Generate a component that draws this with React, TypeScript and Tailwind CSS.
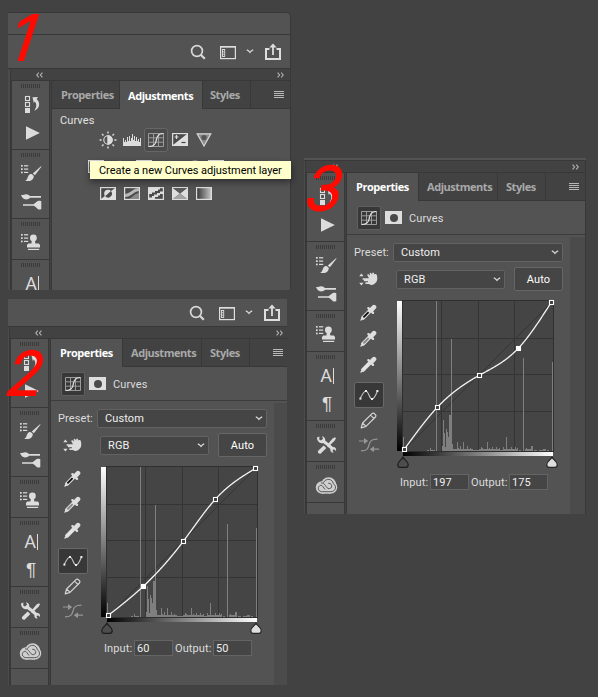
import React from "react";

const UI = "font-['Roboto','Liberation_Sans',sans-serif]";

type Pt = [number, number];

/* Natural cubic spline through the control points, sampled at every half pixel. */
function spline(p: Pt[]): string {
  const n = p.length;
  const y2 = new Array(n).fill(0);
  const u = new Array(n).fill(0);
  for (let i = 1; i < n - 1; i++) {
    const sig = (p[i][0] - p[i - 1][0]) / (p[i + 1][0] - p[i - 1][0]);
    const q = sig * y2[i - 1] + 2;
    y2[i] = (sig - 1) / q;
    const d =
      (p[i + 1][1] - p[i][1]) / (p[i + 1][0] - p[i][0]) -
      (p[i][1] - p[i - 1][1]) / (p[i][0] - p[i - 1][0]);
    u[i] = ((6 * d) / (p[i + 1][0] - p[i - 1][0]) - sig * u[i - 1]) / q;
  }
  for (let i = n - 2; i >= 0; i--) y2[i] = y2[i] * y2[i + 1] + u[i];
  let out = "";
  let k = 0;
  for (let x = p[0][0]; x <= p[n - 1][0]; x += 0.5) {
    while (k < n - 2 && x > p[k + 1][0]) k++;
    const h = p[k + 1][0] - p[k][0];
    const a = (p[k + 1][0] - x) / h;
    const b = (x - p[k][0]) / h;
    const y =
      a * p[k][1] + b * p[k + 1][1] +
      (((a ** 3 - a) * y2[k] + (b ** 3 - b) * y2[k + 1]) * h * h) / 6;
    out += `${out ? "L" : "M"}${x.toFixed(2)} ${y.toFixed(2)}`;
  }
  return out;
}

/* ---------- sidebar icons ---------- */

const Slot = ({ children }: { children: React.ReactNode }) => (
  <svg width="22" height="18" viewBox="0 0 22 18" fill="#dcdcdc" className="block overflow-visible">
    {children}
  </svg>
);

const List = () => (
  <g>
    {[0, 3.3, 6.6].map((y) => (
      <g key={y}>
        <rect x="0" y={y} width="1.7" height="1.7" />
        <rect x="3" y={y + 0.2} width="4.2" height="1.2" />
      </g>
    ))}
  </g>
);

const HistoryIcon = () => (
  <Slot>
    <g fill="none" stroke="#dcdcdc" strokeWidth="1.1">
      <rect x="4.5" y="0.5" width="4" height="4" />
      <rect x="4.5" y="6.5" width="4" height="4" />
    </g>
    <rect x="4" y="12" width="5" height="5" />
    <path d="M11.5 1.3 17 1 15.6 3.2C19.6 6.2 19 12.5 13.2 14.8 15.8 11.5 16 8 13.8 5.6L12.8 7Z" />
  </Slot>
);
const PlayIcon = () => (
  <Slot><path d="M5 2.2 18.8 9 5 15.8Z" /></Slot>
);
const BrushIcon = () => (
  <Slot>
    <List />
    <path d="M20.6 1.6 13.9 10.3 11.8 8.4 20 1.3Z" />
    <path d="M10.8 9.2C12.6 10 13 11 12.7 12.2 11.8 15.8 7.5 16.8 4.2 15.7 6.6 15 6.3 12.6 7.4 10.8 8.2 9.5 9.6 8.8 10.8 9.2Z" />
  </Slot>
);
const BrushesIcon = () => (
  <Slot>
    <path d="M0 2C2.2 2.4 3 1.2 5 1.2 7 1.2 8 2.2 9 3H20V4.8H9C8 6 7 6.4 5 6.4 2.6 6.4 1 4.6 0 2Z" />
    <path d="M2 11.2H12.5C14.2 10.4 16 8 17.6 7.8 18.8 7.6 20.3 8 20.3 8.2V16C19 16.8 17.5 16.6 16.8 16 15.3 14.8 14 13 12.5 12.8H2Z" />
  </Slot>
);
const StampIcon = () => (
  <Slot>
    <List />
    <circle cx="12.4" cy="4" r="3.4" />
    <path d="M11 6h2.8l.6 3.6h3.4L19 11v2.6H6V11l1.2-1.4h3.2Z" />
    <rect x="7" y="14.8" width="11.2" height="1.2" />
  </Slot>
);
const TypeIcon = () => (
  <div className="flex h-[18px] w-[22px] items-center justify-center gap-px text-[18px] leading-[18px] text-[#dcdcdc]">
    <span className="font-['Roboto',sans-serif]">A</span>
    <span className="h-4 w-px bg-[#dcdcdc]" />
  </div>
);
const ParagraphIcon = () => (
  <div className="flex h-[18px] w-[22px] items-center justify-center font-['Liberation_Sans',sans-serif] text-[19px] leading-[18px] text-[#dcdcdc]">
    ¶
  </div>
);
const ToolsIcon = () => (
  <Slot>
    <path d="M1 1.6 3.4 0.4 3.2 3.6 5 4.6 7.2 2.6 5.8 0.4C8 .2 9.6 2 9.2 4.6L17 11C19.4 10.8 20.6 12.6 20 15L18 13.2 16.4 14.6 17.6 16.6C15.4 17 14 15.2 14.4 13L7.2 7C4.2 8.2 1 5.6 1 1.6Z" />
    <path d="M19 1.2 20 2.2 18.6 4.8 12 11 10.6 9.6 16.6 2.6Z" />
    <path d="M7.6 9.4 10.4 12 4.8 17.6C3.4 18.4 1.2 16.6 2 15Z" />
    <path d="m9.4 9.2 2 1.8" stroke="#535353" strokeWidth="1" />
  </Slot>
);
const CloudIcon = () => (
  <Slot>
    <g fill="#cfcfcf">
      <circle cx="6" cy="10.5" r="6.2" />
      <circle cx="12.6" cy="7.8" r="7.6" />
      <circle cx="14.8" cy="10.2" r="6.4" />
      <rect x="6" y="10" width="9" height="6.7" />
    </g>
    <g fill="none" stroke="#4c4c4c" strokeWidth="0.9" strokeLinecap="round">
      <path d="M8.8 12.2C7.3 10.6 6.6 8.3 5.2 8.3 1.2 8.6 1.2 14.4 5.8 14.7H14.8C20.4 14.4 20.6 8.4 17.4 6.8 16.4 1.4 9.8.8 7.6 5.4" />
      <path d="M5.4 5.9C9.6 5.6 9.8 11.8 13.2 11.7 17 11.4 16.4 5.8 12.6 6.2" />
    </g>
  </Slot>
);

const Grip = () => (
  <div className="ml-[9px] flex gap-px">
    {Array.from({ length: 10 }, (_, i) => (
      <span key={i} className="h-1 w-px bg-[#3b3b3b]" />
    ))}
  </div>
);

const Group = ({ children, tall }: { children: React.ReactNode; tall?: boolean }) => (
  <div className={`${tall ? "h-[69px]" : "h-[41px]"} shrink-0 border-b border-[#383838] bg-[#535353] pt-[3px]`}>
    <Grip />
    <div className="ml-[9px] mt-2 flex flex-col gap-[10px]">{children}</div>
  </div>
);

const Sidebar = () => (
  <div className="flex w-[39px] shrink-0 flex-col overflow-hidden border-x border-[#383838] bg-[#535353]">
    <Group tall><HistoryIcon /><PlayIcon /></Group>
    <Group tall><BrushIcon /><BrushesIcon /></Group>
    <Group><StampIcon /></Group>
    <Group tall><TypeIcon /><ParagraphIcon /></Group>
    <Group><ToolsIcon /></Group>
    <Group><CloudIcon /></Group>
  </div>
);

/* ---------- toolbar ---------- */

const Chevron = () => (
  <svg width="8" height="5" viewBox="0 0 8 5" fill="none" stroke="#d8d8d8" strokeWidth="1.3" className="block">
    <path d="M.8.8Q2.4 1.4 4 3.4 5.6 1.4 7.2.8" />
  </svg>
);

const Toolbar = ({ className }: { className: string }) => (
  <div className={`flex items-center justify-end bg-[#535353] ${className}`}>
    <svg width="16" height="18" viewBox="0 0 16 18" fill="none" stroke="#d8d8d8" className="mr-[14px]">
      <circle cx="7" cy="8" r="5.4" strokeWidth="1.7" />
      <path d="m10.8 11.8 4 4" strokeWidth="2.2" />
    </svg>
    <svg width="16" height="18" viewBox="0 0 16 18" fill="none" stroke="#dedede" className="mr-[10px]">
      <rect x=".6" y="3.6" width="14.8" height="12" strokeWidth="1.2" />
      <path d="M0 3.8H16" strokeWidth="1.6" />
      <rect x="2.5" y="6.5" width="2.2" height="7" strokeWidth=".9" />
      <path d="M2.5 8.8h2M2.5 11.2h2" strokeWidth=".8" />
    </svg>
    <Chevron />
    <svg width="16" height="18" viewBox="0 0 16 18" fill="none" stroke="#dedede" className="ml-[11px]">
      <path d="M4.5 6H1V16H15V6H11.5" strokeWidth="2" />
      <path d="M8 12V3" strokeWidth="1.8" />
      <path d="M4.4 4.4 8 .4l3.6 4Z" fill="#dedede" stroke="none" />
    </svg>
  </div>
);

/* ---------- panel frame ---------- */

const Tab = ({ label, active, className }: { label: string; active?: boolean; className: string }) => (
  <div
    className={`flex shrink-0 items-center border-r border-[#383838] font-['Open_Sans',sans-serif] text-[11px] font-bold leading-none tracking-[-0.45px] ${
      active ? "bg-[#535353] text-white" : "border-b bg-[#424242] text-[#a9a9a9]"
    } ${className}`}
  >
    <span className="whitespace-nowrap">{label}</span>
  </div>
);

const Arrows = ({ flip }: { flip?: boolean }) => (
  <svg width="7" height="6" viewBox="0 0 7 6" fill="none" stroke="#b4b4b4" strokeWidth="1.1" className={flip ? "-scale-x-100" : ""}>
    <path d="M.6.6 2.6 3 .6 5.4M4.2.6 6.2 3 4.2 5.4" />
  </svg>
);

function Dock({
  gutter, edge, tabs, children,
}: {
  gutter: string; edge?: boolean; tabs: React.ReactNode; children: React.ReactNode;
}) {
  return (
    <div className="flex min-h-0 flex-1">
      <div className={`shrink-0 border-r border-t border-[#383838] bg-[#4b4b4b] ${gutter}`} />
      <div className={`flex min-w-0 flex-1 flex-col ${edge ? "border-r border-[#383838]" : ""}`}>
        <div className={`flex h-[13px] shrink-0 items-center justify-between border-y border-[#383838] bg-[#424242] pl-[25px] ${edge ? "pr-[6px]" : "pr-1"}`}>
          <Arrows flip />
          <Arrows />
        </div>
        <div className="flex min-h-0 flex-1">
          <Sidebar />
          <div className="ml-px flex min-w-0 flex-1 flex-col border-l border-[#383838] bg-[#535353]">
            <div className="flex h-7 shrink-0">
              {tabs}
              <div className="flex flex-1 items-center justify-end border-b border-[#383838] bg-[#424242]">
                <div className={`flex flex-col gap-px ${edge ? "mr-[6px]" : "mr-1"}`}>
                  {[0, 1, 2, 3].map((i) => <span key={i} className="h-px w-[10px] bg-[#b8b8b8]" />)}
                </div>
              </div>
            </div>
            {children}
          </div>
        </div>
      </div>
    </div>
  );
}

/* ---------- curves properties ---------- */

const CurvesGlyph = () => (
  <svg width="16" height="14" viewBox="0 0 16 14" fill="none" stroke="#9b9b9b">
    <path d="M.5.5h15v13H.5ZM5.5.5v13M10.5.5v13M.5 4.8h15M.5 9.2h15" />
    <path d="M.5 13.5C8 13.2 7.8 9 8.3 7 8.9 3.4 10 .8 15.5.5" stroke="#e4e4e4" strokeWidth="1.2" />
  </svg>
);

const Dropper = ({ fill }: { fill: string }) => (
  <svg width="17" height="17" viewBox="0 0 17 17" className="block" strokeLinecap="round" fill="none">
    <path d="M9.4 7.4 3 13.8" stroke="#dedede" strokeWidth="4" />
    <path d="M1 16l1.5-1.5" stroke="#dedede" strokeWidth="1.4" />
    <path d="M8.6 8.2 3.4 13.4" stroke={fill} strokeWidth="1.9" strokeLinecap="butt" />
    <path d="M8.4 4.2 13 8.8" stroke="#dedede" strokeWidth="2.4" />
    <path d="M11.4 5.8 14 3.2" stroke="#dedede" strokeWidth="4.6" />
  </svg>
);

const ToolColumn = () => (
  <div className="flex w-[43px] flex-col items-center">
    <div className="mt-[4px]"><Dropper fill="#111" /></div>
    <div className="mt-[9px]"><Dropper fill="#858585" /></div>
    <div className="mt-[9px]"><Dropper fill="#e6e6e6" /></div>
    <div className="mt-[9px] flex h-[26px] w-[30px] items-center justify-center rounded-[2px] border border-[#686868] bg-[#383838]">
      <svg width="20" height="12" viewBox="0 0 20 12" fill="none">
        <path d="M1.5 9C3 6 5 1.8 7 2 9.6 2.2 10.4 10 13 10 15.4 10 17 5.6 18.3 2.4" stroke="#c8c8c8" strokeWidth="1.1" />
        <g fill="#eee">
          <rect x=".4" y="8.6" width="2" height="2" /><rect x="6" y="1" width="2" height="2" />
          <rect x="12" y="9" width="2" height="2" /><rect x="17.4" y="1" width="2" height="2" />
        </g>
      </svg>
    </div>
    <svg width="17" height="17" viewBox="0 0 17 17" fill="none" stroke="#d4d4d4" strokeWidth="1.2" strokeLinejoin="round" className="mt-[4px]">
      <path d="M1.2 15.8 2.6 11 12 1.6Q13.2.6 14.6 1.8L15.4 2.6Q16.4 3.8 15.4 5L6 14.4ZM10.6 3.2l3.2 3.2M2.8 11.2 5.8 14.2" />
    </svg>
    <svg width="20" height="14" viewBox="0 0 20 14" fill="none" stroke="#979797" strokeWidth="1.2" className="mt-[9px]">
      <path d="M2 12.8C8 12.8 9 11 10 7 11 3 12 1.2 18.5 1.2M0 3H6M20 11.2H14" />
      <path d="M5 0 9.2 3 5 6ZM15 8.2 10.8 11.2 15 14.2Z" fill="#979797" stroke="none" />
    </svg>
  </div>
);

/* [x, top] of each histogram column inside the graph */
const bars: Pt[] = [
  [6, 137], [39, 1], [54, 39], [126, 58], [155, 62],
  [33, 148], [46, 120], [47, 133], [48, 147], [49, 129], [50, 132], [51, 137], [52, 115], [53, 115], [55, 144],
  [45, 146], [60, 142], [66, 142], [63, 146], [61, 148], [70, 146], [73, 148], [84, 147], [85, 148], [90, 142],
  [92, 148], [95, 147], [99, 147], [102, 148], [106, 147], [109, 137], [114, 147], [118, 147], [120, 148],
  [129, 148], [134, 146], [135, 146],
];

function Graph({ points, solid }: { points: Pt[]; solid: number }) {
  return (
    <svg width="164" height="170" viewBox="0 0 164 170" className="block shrink-0 overflow-visible">
      <defs>
        <linearGradient id="toneV" x1="0" y1="0" x2="0" y2="1">
          <stop stopColor="#fff" /><stop offset="1" stopColor="#000" />
        </linearGradient>
        <linearGradient id="toneH">
          <stop stopColor="#000" /><stop offset="1" stopColor="#fff" />
        </linearGradient>
      </defs>
      <rect x="0" y="1" width="5" height="150" fill="url(#toneV)" />
      <rect x="6" y="152" width="150" height="4" fill="url(#toneH)" />
      <rect x="5.5" y=".5" width="151" height="151" fill="#454545" stroke="#2f2f2f" />
      <path d="M44.5 1V151M81.5 1V151M117.5 1V151M6 38.5H156M6 74.5H156M6 111.5H156" stroke="#343434" />
      <path d="M6 151 156 1" stroke="#343434" />
      <g fill="#7f7f7f" shapeRendering="crispEdges">
        {bars.map(([x, y]) => <rect key={x} x={x} y={y} width="1" height={151 - y} />)}
        <path d="M30 150h2v1h-2zM34 150h4v1h-4zM56 149h20v2h-20zM76 150h6v1h-6zM82 149h20v2h-20zM103 150h4v1h-4zM107 149h14v2h-14zM122 150h2v1h-2zM128 149h6v2h-6zM137 150h3v1h-3zM142 150h4v1h-4zM146 149h3v2h-3zM150 150h2v1h-2z" />
      </g>
      <path d={spline(points)} fill="none" stroke="#f4f4f4" strokeWidth="1.3" />
      {points.map(([x, y], i) => (
        <rect
          key={i} x={Math.floor(x) - 1.5} y={Math.floor(y) - 1.5} width="4" height="4"
          fill={i === solid ? "#fff" : "#3a3a3a"} stroke="#fff" strokeWidth="1.1"
        />
      ))}
      <path d="M6 157.2C7 159.5 11.2 161.5 11.2 164.5Q11.2 167.3 9 167.3H3Q.8 167.3.8 164.5C.8 161.5 5 159.5 6 157.2Z" fill="#4d4d4d" stroke="#1c1c1c" strokeWidth="1.2" />
      <path d="M155 157.2C156 159.5 160.2 161.5 160.2 164.5Q160.2 167.3 158 167.3H152Q149.8 167.3 149.8 164.5C149.8 161.5 154 159.5 155 157.2Z" fill="#dedede" stroke="#262626" strokeWidth="1.2" />
    </svg>
  );
}

const Select = ({ label, className }: { label: string; className: string }) => (
  <div className={`flex items-center justify-between rounded-[2px] border border-[#626262] bg-[#454545] pr-[3px] text-[#f0f0f0] ${className}`}>
    <span>{label}</span>
    <Chevron />
  </div>
);

const Field = ({ value }: { value: string }) => (
  <div className="flex h-4 w-[39px] items-center border border-[#646464] bg-[#454545] pl-[2px] text-[#eee]">{value}</div>
);

function CurvesProperties(props: { points: Pt[]; solid: number; input: string; output: string }) {
  return (
    <div className={`flex min-h-0 flex-1 flex-col text-[11px] leading-none tracking-[0.1px] text-[#dcdcdc] ${UI}`}>
      <div className="flex h-[34px] shrink-0 items-center border-b border-[#3c3c3c] pl-[10px]">
        <div className="flex h-6 w-6 items-center justify-center rounded-[2px] border border-[#5f5f5f] bg-[#383838]">
          <CurvesGlyph />
        </div>
        <div className="ml-1 flex h-[13px] w-[17px] items-center justify-center bg-[#dedede]">
          <span className="h-2 w-2 rounded-full bg-[#4a4a4a]" />
        </div>
        <span className="ml-[7px] pt-px">Curves</span>
      </div>
      <div className="mt-px flex min-h-0 flex-1">
        <div className="w-[223px] shrink-0">
          <div className="mt-[7px] flex h-[19px] items-center pl-[7px]">
            <span className="w-[39px] whitespace-nowrap">Preset:</span>
            <Select label="Custom" className="h-[19px] w-[170px] pl-[7px]" />
          </div>
          <div className="mt-[5px] flex h-6 items-center pl-3">
            <svg width="20" height="16" viewBox="0 0 20 16" fill="#dcdcdc" className="mr-[17px]">
              <path d="M2.4 2.4 4.6 5.2H.2ZM2.4 14.6 4.6 11.8H.2Z" />
              <path d="M3.6 7.2H10L8.4 4.6C8 3.2 9.2 2.8 9.9 3.6L11.2 4.8 10.6 2.8C10.8 1.6 12 1.6 12.4 2.6L13.2 3.6V2.2C13.6 1.2 14.8 1.4 15 2.4L15.6 3.4C16.6 2.4 17.6 3.2 17.8 4 18.9 8 18.4 11 15 13.2 13 14.4 11.4 14.2 10 13H7C6 12.8 6 11.4 7 11.2H9V10.2H5.4C4.6 10 4.6 8.9 5.4 8.7H3.6Z" />
            </svg>
            <Select label="RGB" className="h-[19px] w-[109px] pl-[7px]" />
            <div className="ml-[9px] flex h-6 w-[49px] items-center justify-center rounded-[2px] border border-[#666] bg-[#454545] text-white">
              Auto
            </div>
          </div>
          <div className="mt-[9px] flex h-[170px]">
            <ToolColumn />
            <div className="ml-[7px]"><Graph points={props.points} solid={props.solid} /></div>
          </div>
          <div className="mt-1 flex h-4 items-center pl-[53px]">
            <span className="w-[30px] whitespace-nowrap">Input:</span>
            <Field value={props.input} />
            <span className="ml-[2px] w-[38px] whitespace-nowrap">Output:</span>
            <Field value={props.output} />
          </div>
        </div>
        <div className="mt-px flex-1 bg-[#4b4b4b]" />
      </div>
    </div>
  );
}

/* ---------- adjustments ---------- */

const Cell = ({ children, on }: { children: React.ReactNode; on?: boolean }) => (
  <div className={`flex h-6 w-6 items-center justify-center ${on ? "rounded-[3px] border border-[#666] bg-[#4b4b4b]" : ""}`}>
    {children}
  </div>
);
const Tile = ({ children }: { children?: React.ReactNode }) => (
  <svg width="16" height="14" viewBox="0 0 16 14" className="block">
    <rect x=".6" y=".6" width="14.8" height="11.8" fill="#4a4a4a" stroke="#dedede" strokeWidth="1.2" />
    {children}
  </svg>
);

const Adjustments = () => (
  <div className={`relative flex flex-1 flex-col text-[11px] leading-none tracking-[0.1px] text-[#e2e2e2] ${UI}`}>
    <span className="ml-2 mt-[6px]">Curves</span>
    <div className="ml-11 mt-0.5 flex">
      <Cell>
        <svg width="18" height="18" viewBox="0 0 18 18" fill="none" stroke="#dcdcdc" strokeWidth="1.4" className="shrink-0">
          <circle cx="9" cy="9" r="4.2" strokeWidth="1.1" />
          <path d="M9 5a4 4 0 0 1 0 8Z" fill="#dcdcdc" />
          <path d="M9 .6v2M9 15.4v2M.6 9h2M15.4 9h2M3 3l1.5 1.5M13.5 13.5 15 15M3 15l1.5-1.5M13.5 4.5 15 3" />
        </svg>
      </Cell>
      <Cell>
        <svg width="18" height="14" viewBox="0 0 18 14" fill="#dcdcdc" className="shrink-0" shapeRendering="crispEdges">
          <path d="M0 13V5h1v4h1V7h1v2h1V4h1v4h1V3h1v5h1V5h1V1h1v6h1V3h1v5h1V4h1v4h1V6h1v3h1V5h1v8Z" />
        </svg>
      </Cell>
      <Cell on><CurvesGlyph /></Cell>
      <Cell>
        <Tile>
          <path d="M15 1V12H1Z" fill="#dedede" />
          <path d="M2.5 4h4M4.5 2v4" stroke="#dedede" strokeWidth="1.2" />
          <path d="M9.5 9.5h4" stroke="#444" strokeWidth="1.2" />
        </Tile>
      </Cell>
      <Cell>
        <svg width="16" height="14" viewBox="0 0 16 14"><path d="M1.2.8H14.8L8 13Z" fill="#8a8a8a" stroke="#d6d6d6" strokeWidth="1.2" /><circle cx="8" cy="4.6" r="2.6" fill="#555" /></svg>
      </Cell>
    </div>
    <div className="ml-8 mt-[3px] flex">
      <Cell><Tile /></Cell>
      <Cell><svg width="16" height="14" viewBox="0 0 16 14"><path d="M8 0 13 8H3Z" fill="#8a8a8a" /></svg></Cell>
      <Cell><Tile /></Cell>
      <Cell><svg width="16" height="14" viewBox="0 0 16 14"><path d="M3 3h9v8H3Z" fill="#777" /></svg></Cell>
      <Cell><svg width="16" height="16" viewBox="0 0 16 16"><circle cx="11" cy="6" r="5" fill="#8a8a8a" /></svg></Cell>
      <Cell><Tile /></Cell>
    </div>
    <div className="ml-11 mt-[3px] flex">
      <Cell>
        <Tile>
          <path d="M15 1V12H1Z" fill="#dedede" />
          <circle cx="8" cy="6.5" r="3.8" fill="#dedede" /><path d="M10.9 4A3.8 3.8 0 0 1 5.2 9.2Z" fill="#4a4a4a" />
        </Tile>
      </Cell>
      <Cell>
        <Tile><path d="M1 7C7 6 9 1 15 1V4C9 5 7 10 1 10Z" fill="#b8b8b8" /><path d="M5 12C9 10 10 7 15 6V12Z" fill="#8a8a8a" /></Tile>
      </Cell>
      <Cell>
        <Tile>
          <path d="M1 1H12V2.5H10V4H7V5.5H4V7H1ZM1 12V10.5H4V9H6V7.5H9V6H12V4.5H15V7H12V8.5H10V10H7V12Z" fill="#dedede" />
        </Tile>
      </Cell>
      <Cell>
        <Tile><path d="M1 1 8 6.5 1 12ZM15 1 8 6.5 15 12Z" fill="#dedede" /><path d="M1 12 8 6.5 15 12Z" fill="#a4a4a4" /><path d="M1 1 8 6.5 15 1Z" fill="#5c5c5c" /></Tile>
      </Cell>
      <Cell>
        <svg width="16" height="14" viewBox="0 0 16 14">
          <defs><linearGradient id="map"><stop stopColor="#333" /><stop offset="1" stopColor="#c8c8c8" /></linearGradient></defs>
          <rect x=".6" y=".6" width="14.8" height="11.8" fill="url(#map)" stroke="#dedede" strokeWidth="1.2" />
        </svg>
      </Cell>
    </div>
    <div className="absolute left-[38px] top-[52px] flex h-[18px] w-[201px] items-center whitespace-nowrap bg-[#ffffcc] pl-[9px] text-[11px] tracking-[-0.04px] text-black shadow-[0_3px_7px_rgba(0,0,0,0.45)]">
      Create a new Curves adjustment layer
    </div>
  </div>
);

/* Red hand-marked step number laid over a window's corner */
const Mark = ({ n, className }: { n: string; className: string }) => (
  <span
    className={`absolute z-10 font-['Inter',sans-serif] font-light leading-tight text-[#ff0a00] [-webkit-text-stroke:2px_#ff0a00] [paint-order:stroke] [stroke-linejoin:round] ${className}`}
  >
    {n}
  </span>
);

export default function App() {
  const propTabs = (
    <>
      <Tab label="Properties" active className="w-[72px] pb-[2px] pl-[9px]" />
      <Tab label="Adjustments" className="w-[79px] pb-px pl-2" />
      <Tab label="Styles" className="w-12 pb-px pl-2" />
    </>
  );
  return (
    <div className="flex h-[697px] w-[598px] items-start overflow-hidden bg-[#424242] pl-2">
      <div className="flex w-[283px] flex-col pt-[12px]">
        <div className="relative flex h-[278px] flex-col">
          <div className="h-[23px] shrink-0 rounded-tr-[5px] border-y border-r border-[#383838] bg-[#535353]" />
          <Toolbar className="h-[33px] shrink-0 border-r border-[#383838] pr-[9px]" />
          <Dock
            gutter="w-[3px]"
            edge
            tabs={
              <>
                <Tab label="Properties" className="w-[68px] pl-[9px]" />
                <Tab label="Adjustments" active className="w-[83px] pl-2" />
                <Tab label="Styles" className="w-12 pl-[7px]" />
              </>
            }
          >
            <Adjustments />
          </Dock>
          <Mark n="1" className="left-[4px] top-[-13px] -skew-x-[18deg] text-[62px]" />
        </div>
        <div className="relative mt-[9px] flex h-[386px] w-[279px] flex-col">
          <Toolbar className="h-[27px] shrink-0 pr-[7px]" />
          <Dock gutter="w-[2px]" tabs={propTabs}>
            <CurvesProperties
              points={[[7.3, 149.3], [42.3, 120.3], [82.3, 75.3], [114.3, 33.3], [154.3, 2.5]]}
              solid={1}
              input="60"
              output="50"
            />
          </Dock>
          <Mark n="2" className="left-0 top-[37px] -skew-x-[14deg] text-[60px]" />
        </div>
      </div>
      <div className="relative ml-[13px] mt-[158px] flex h-[356px] w-[282px] flex-col">
        <div className="h-[2px] shrink-0 bg-[#535353]" />
        <Dock gutter="w-[2px]" edge tabs={propTabs}>
          <CurvesProperties
            points={[[7.3, 149.3], [40.3, 107.3], [82.3, 75.3], [121.3, 48.3], [154.3, 2.3]]}
            solid={3}
            input="197"
            output="175"
          />
        </Dock>
        <Mark n="3" className="left-[3px] top-[-7px] -skew-x-[14deg] text-[60px]" />
      </div>
    </div>
  );
}
